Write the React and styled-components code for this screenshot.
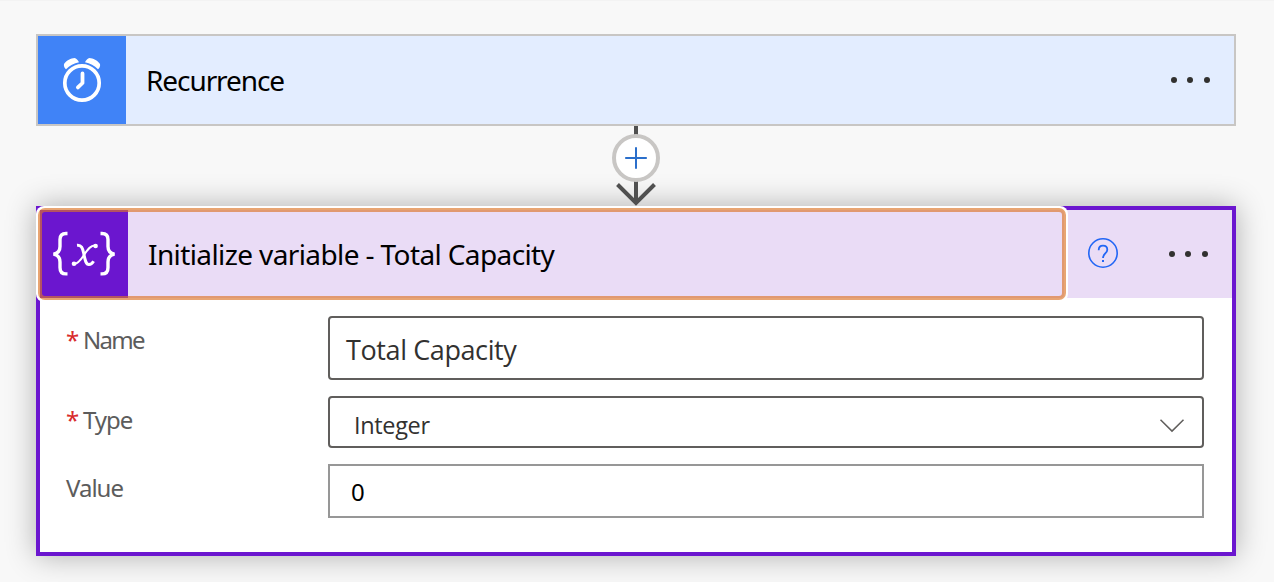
import React from 'react';
import styled, { createGlobalStyle } from 'styled-components';

const Global = createGlobalStyle`
  * { box-sizing: border-box; }
  body {
    margin: 0;
    background: #f8f8f8;
    font-family: "Noto Sans", "Open Sans", sans-serif;
  }
`;

const Canvas = styled.main`
  display: flex;
  flex-direction: column;
  height: 582px;
  padding: 33px 38px 26px 36px;
  border-top: 1px solid #f3f3f3;
  overflow: hidden;
`;

const TriggerCard = styled.section`
  display: flex;
  align-items: center;
  height: 92px;
  flex: none;
  background: #e3edff;
  border: 2px solid #c8c6c4;
`;

const IconTile = styled.div`
  display: flex;
  flex: none;
  width: 88px;
  height: 88px;
  background: ${(p) => p.$color};
`;

const Title = styled.h2`
  flex: 1;
  margin: 0 0 0 20px;
  font-size: 28px;
  font-weight: 400;
  line-height: 38px;
  letter-spacing: ${(p) => p.$tracking};
  color: #000;
  white-space: nowrap;
`;

const MoreButton = styled.button`
  display: flex;
  gap: 10.5px;
  margin: 0 ${(p) => p.$right} 0 0;
  padding: 0;
  border: 0;
  background: none;
`;

const Dot = styled.i`
  width: 6px;
  height: 6px;
  border-radius: 50%;
  background: #323130;
`;

const Connector = styled.div`
  display: flex;
  justify-content: center;
  height: 80px;
  flex: none;
  position: relative;
  z-index: 1;
`;

const ActionCard = styled.section`
  height: 350px;
  flex: none;
  background: #fff;
  border: 4px solid #6b16cf;
  box-shadow: 0 0 28px rgba(0, 0, 0, 0.3);
`;

const ActionHeader = styled.header`
  display: flex;
  align-items: center;
  height: 88px;
  background: #eadcf6;
`;

const HeaderMain = styled.div`
  position: relative;
  display: flex;
  align-items: center;
  width: 1024px;
  height: 88px;
  border-radius: 4px;
  box-shadow: 0 0 0 4px #fff;

  &::after {
    content: "";
    position: absolute;
    inset: -2px;
    border: 4px solid rgba(220, 116, 40, 0.65);
    border-radius: 7px;
  }
`;

const HelpButton = styled.button`
  display: flex;
  margin: 0 auto 0 23px;
  padding: 0 0 2px;
  border: 0;
  background: none;
`;

const Form = styled.div`
  display: flex;
  flex-direction: column;
  gap: 16px;
  padding: 18px 28px 0 26px;
`;

const Row = styled.div`
  display: flex;
  height: ${(p) => p.$height};
`;

const Label = styled.label`
  width: 262px;
  padding-top: 8px;
  font-size: 24px;
  line-height: 32px;
  letter-spacing: ${(p) => p.$tracking};
  color: #5c5c5c;
  white-space: nowrap;
`;

const Required = styled.span`
  display: inline-block;
  width: 17px;
  letter-spacing: 0;
  color: #d92c2c;
`;

const Field = styled.div`
  display: flex;
  flex: 1;
  align-items: center;
  justify-content: space-between;
  border: 2px solid ${(p) => (p.$plain ? '#979797' : '#605e5c')};
  border-radius: ${(p) => (p.$plain ? '0' : '4px')};
  padding: ${(p) => p.$pad};
  font-family: ${(p) => (p.$plain ? '"Noto Sans"' : '"Open Sans"')}, sans-serif;
  font-size: ${(p) => p.$size};
  letter-spacing: ${(p) => p.$tracking || '0'};
  line-height: 36px;
  color: ${(p) => (p.$plain ? '#000' : '#323130')};
`;

const More = ({ right }) => (
  <MoreButton $right={right} aria-label="More commands">
    <Dot /><Dot /><Dot />
  </MoreButton>
);

const ClockIcon = () => (
  <svg width="88" height="88" viewBox="0 0 88 88" fill="none" stroke="#fff">
    <circle cx="44" cy="47" r="17.2" strokeWidth="3.7" />
    <path d="M44.5 37.5v9.5l-4.6 4.4" strokeWidth="3.8" strokeLinecap="round" strokeLinejoin="round" />
    <path d="M26 28C28.500 24.500 33 22.200 36.500 22c1.800 0 3.500 2.600 4.500 4.200C36 27.200 31.500 29.500 28 33.200 26.500 32.200 25.500 30 26 28ZM62 28C59.500 24.500 55 22.200 51.500 22c-1.800 0-3.500 2.600-4.500 4.200C52 27.200 56.500 29.500 60 33.200 61.500 32.200 62.500 30 62 28Z" fill="#fff" stroke="none" />
  </svg>
);

const VariableIcon = () => (
  <svg width="88" height="88" viewBox="0 0 88 88" fill="none" stroke="#fff">
    <path d="M27.5 23.5h-1.5q-6 0-6 6v7q0 6.5-6.5 7.7q6.500 1.200 6.500 7.700v5.500q0 6.500 6 6.500h1.500M60.500 23.500h1.500q6 0 6 6v7q0 6.500 6.500 7.700q-6.500 1.200-6.500 7.700v5.500q0 6.500-6 6.500h-1.500" strokeWidth="3.4" />
    <path d="M37 35.200c4.500-.4 5.600 2.800 6.700 8 1.300 6.300 2 11.500 5.300 11.300 1.800-.1 3.300-1.300 4.600-3.300" strokeWidth="3" />
    <path d="M56 35.700c-4.800-1.500-8.500 3.800-12 9.300-3.500 5.500-6.500 9.300-10.500 9" strokeWidth="2" />
    <circle cx="55.600" cy="36" r="2.300" fill="#fff" stroke="none" />
    <circle cx="34" cy="53.700" r="2.300" fill="#fff" stroke="none" />
  </svg>
);

const AddStep = () => (
  <svg width="60" height="80" viewBox="0 0 60 80" fill="none">
    <path d="M30 0v76M11.500 58.500l18.500 18.500 18.500-18.500" stroke="#505050" strokeWidth="4" />
    <circle cx="30" cy="32" r="22" fill="#fff" stroke="#c8c6c4" strokeWidth="4" />
    <path d="M19.200 32h21.600M30 21.200v21.600" stroke="#2b6fcb" strokeWidth="2" />
  </svg>
);

const HelpIcon = () => (
  <svg width="32" height="32" viewBox="0 0 32 32" fill="none" stroke="#2266f5">
    <circle cx="16" cy="16" r="14.200" strokeWidth="1.600" />
    <path d="M11.700 13.200c0-2.800 1.800-4.500 4.300-4.500s4.300 1.700 4.300 4.100c0 3.500-4.300 4-4.300 8.200" strokeWidth="1.800" />
    <path d="M15 23h2v2h-2z" fill="#2266f5" stroke="none" />
  </svg>
);

const Chevron = () => (
  <svg width="26" height="16" viewBox="0 0 26 16" fill="none">
    <path d="M1.500 2.700L13 14.100 24.500 2.700" stroke="#605e5c" strokeWidth="1.500" />
  </svg>
);

export default function App() {
  return (
    <>
      <Global />
      <Canvas>
        <TriggerCard>
          <IconTile $color="#4083f7"><ClockIcon /></IconTile>
          <Title $tracking="-1.08px">Recurrence</Title>
          <More right="24.5px" />
        </TriggerCard>
        <Connector><AddStep /></Connector>
        <ActionCard>
          <ActionHeader>
            <HeaderMain>
              <IconTile $color="#6b16cf"><VariableIcon /></IconTile>
              <Title $tracking="-0.61px">Initialize variable - Total Capacity</Title>
            </HeaderMain>
            <HelpButton aria-label="Help"><HelpIcon /></HelpButton>
            <More right="24.5px" />
          </ActionHeader>
          <Form>
            <Row $height="64px">
              <Label $tracking="-1.75px"><Required>*</Required>Name</Label>
              <Field $size="27px" $tracking="-0.4px" $pad="4px 16px 0">Total Capacity</Field>
            </Row>
            <Row $height="52px">
              <Label $tracking="-1px"><Required>*</Required>Type</Label>
              <Field $size="23.5px" $tracking="-0.35px" $pad="6px 17px 0 24px">Integer<Chevron /></Field>
            </Row>
            <Row $height="54px">
              <Label $tracking="-1px">Value</Label>
              <Field $plain $size="24px" $pad="2px 20px 0 21px">0</Field>
            </Row>
          </Form>
        </ActionCard>
      </Canvas>
    </>
  );
}
